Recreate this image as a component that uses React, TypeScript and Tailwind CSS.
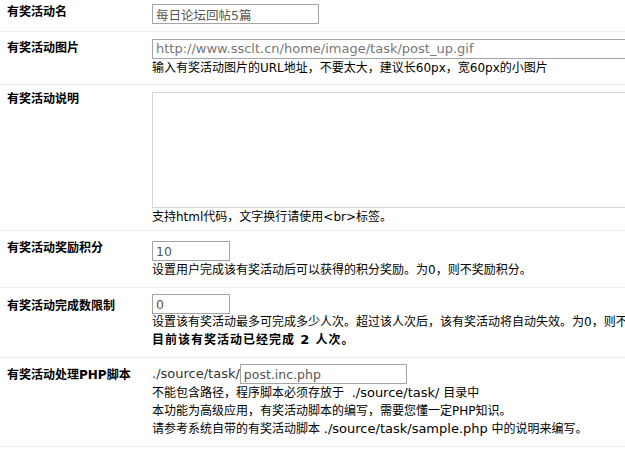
import React from "react";

const font = { fontFamily: '"DejaVu Sans", "Noto Sans CJK SC", sans-serif' };

const L = ({ children }: { children: React.ReactNode }) => <span className="text-[13px]">{children}</span>;

const inputCls =
  "block h-[20px] border border-[#a5a5a5] bg-white px-[3px] text-[12.5px] leading-[18px] text-[#555] outline-none";

export default function App() {
  return (
    <div className="w-[625px] h-[449px] overflow-hidden bg-white text-black" style={font}>
      <div className="flex border-b border-[#ececec] h-[32px]">
        <div className="w-[152px] shrink-0 pl-[7px] pt-[3px] text-[12px] font-bold leading-[18px]">有奖活动名</div>
        <div className="pt-[4px]">
          <input className={`${inputCls} w-[167px]`} defaultValue="每日论坛回帖5篇" />
        </div>
      </div>
      <div className="flex border-b border-[#ececec] h-[53px]">
        <div className="w-[152px] shrink-0 pl-[7px] pt-[7px] text-[12px] font-bold leading-[18px]">有奖活动图片</div>
        <div className="flex-1 min-w-0 pt-[7px]">
          <div className="w-[480px] h-[20px] border border-[#a5a5a5] px-[3px] text-[13px] leading-[18px] text-[#777] whitespace-nowrap overflow-hidden">
            http://www.ssclt.cn/home/image/task/post_up.gif
          </div>
          <div className="text-[12px] leading-[18px] whitespace-nowrap">输入有奖活动图片的URL地址，不要太大，建议长60px，宽60px的小图片</div>
        </div>
      </div>
      <div className="flex border-b border-[#ececec] h-[146px]">
        <div className="w-[152px] shrink-0 pl-[7px] pt-[5px] text-[12px] font-bold leading-[18px]">有奖活动说明</div>
        <div className="flex-1 min-w-0 pt-[7px]">
          <div className="w-[480px] h-[116px] border border-[#d4d4d4]" />
          <div className="text-[12px] leading-[18px] whitespace-nowrap">支持html代码，文字换行请使用&lt;br&gt;标签。</div>
        </div>
      </div>
      <div className="flex border-b border-[#ececec] h-[57px]">
        <div className="w-[152px] shrink-0 pl-[7px] pt-[8px] text-[12px] font-bold leading-[18px]">有奖活动奖励积分</div>
        <div className="flex-1 min-w-0 pt-[10px]">
          <input className={`${inputCls} w-[78px]`} defaultValue="10" />
          <div className="text-[12px] leading-[18px] whitespace-nowrap">设置用户完成该有奖活动后可以获得的积分奖励。为0，则不奖励积分。</div>
        </div>
      </div>
      <div className="flex border-b border-[#ececec] h-[70px]">
        <div className="w-[152px] shrink-0 pl-[7px] pt-[9px] text-[12px] font-bold leading-[18px]">有奖活动完成数限制</div>
        <div className="flex-1 min-w-0 pt-[6px]">
          <input className={`${inputCls} w-[78px]`} defaultValue="0" />
          <div className="text-[12px] leading-[17px] whitespace-nowrap">设置该有奖活动最多可完成多少人次。超过该人次后，该有奖活动将自动失效。为0，则不限制</div>
          <div className="text-[12px] leading-[17px] font-bold whitespace-nowrap tracking-[1px]">
            目前该有奖活动已经完成 <span className="text-[13px]">2</span> 人次。
          </div>
        </div>
      </div>
      <div className="flex border-b border-[#ececec] h-[89px]">
        <div className="w-[152px] shrink-0 pl-[7px] pt-[8px] text-[12px] font-bold leading-[18px]">有奖活动处理PHP脚本</div>
        <div className="flex-1 min-w-0 pt-[6px]">
          <div className="flex items-center text-[13px] text-[#333]">
            <span>./source/task/</span>
            <input className={`${inputCls} w-[167px]`} defaultValue="post.inc.php" />
          </div>
          <div className="text-[12px] leading-[18px] whitespace-nowrap">
            不能包含路径，程序脚本必须存放于&nbsp; <L>./source/task/</L> 目录中
          </div>
          <div className="text-[12px] leading-[18px] whitespace-nowrap">本功能为高级应用，有奖活动脚本的编写，需要您懂一定PHP知识。</div>
          <div className="text-[12px] leading-[18px] whitespace-nowrap">
            请参考系统自带的有奖活动脚本 <L>./source/task/sample.php</L> 中的说明来编写。
          </div>
        </div>
      </div>
    </div>
  );
}
